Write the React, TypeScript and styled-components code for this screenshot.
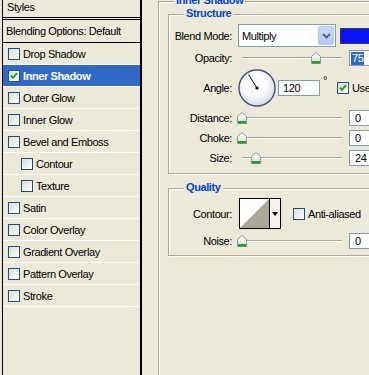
import React from "react";
import styled, { createGlobalStyle } from "styled-components";

const GlobalStyle = createGlobalStyle`
  html, body {
    margin: 0;
    padding: 0;
    background: #ece9d8;
  }
  body {
    font-family: Tahoma, "Liberation Sans", Arial, sans-serif;
    font-size: 11px;
    letter-spacing: -0.4px;
    color: #000;
  }
`;

const Window = styled.div`
  display: flex;
  width: 369px;
  height: 375px;
  overflow: hidden;
  background: #ece9d8;
`;

/* ---------- left: styles list ---------- */

const StylesPanel = styled.div`
  flex: none;
  width: 137px;
  margin-left: 2px;
  border-left: 1px solid #000;
  border-right: 2px solid #000;
  display: flex;
  flex-direction: column;
`;

const PanelHeader = styled.div`
  height: 17px;
  line-height: 14px;
  padding-left: 4px;
  border-bottom: 3px double #000;
`;

const BlendingRow = styled.div`
  height: 22px;
  line-height: 22px;
  padding-left: 3px;
  border-bottom: 1px solid #000;
`;

const EffectRow = styled.div<{ $indent?: boolean; $selected?: boolean }>`
  display: flex;
  align-items: center;
  height: 21px;
  padding-left: ${(p) => (p.$indent ? 18 : 5)}px;
  border-bottom: 1px solid #fff;
  background: ${(p) => (p.$selected ? "#316ac5" : "transparent")};
  color: ${(p) => (p.$selected ? "#fff" : "#000")};
  font-weight: ${(p) => (p.$selected ? "bold" : "normal")};
`;

const Box = styled.span`
  flex: none;
  position: relative;
  width: 10px;
  height: 10px;
  border: 1px solid #1c5180;
  background: linear-gradient(135deg, #dcdcd7 0%, #f4f4f0 70%, #fff 100%);
  margin-right: 3px;

  svg {
    position: absolute;
    left: 0;
    top: 0;
  }
`;

const Checkbox = ({ checked }: { checked?: boolean }) => (
  <Box>
    {checked && (
      <svg width="10" height="10" viewBox="0 0 10 10">
        <path d="M2 4.5 L4 6.8 L8 2.2" fill="none" stroke="#21a121" strokeWidth="2" />
      </svg>
    )}
  </Box>
);

/* ---------- right: options ---------- */

const OptionsArea = styled.div`
  flex: none;
  width: 260px;
  margin-left: 16px;
  padding-top: 1px;
`;

const OuterGroup = styled.div`
  position: relative;
  height: 420px;
  border-top: 1px solid #aca899;
  border-left: 1px solid #aca899;
  box-shadow: inset 1px 1px 0 #fff;
  padding: 12px 0 0 9px;
`;

const GroupBox = styled.div<{ $gap?: number; $padTop: number; $padBottom: number }>`
  position: relative;
  width: 250px;
  margin-top: ${(p) => p.$gap ?? 0}px;
  border: 1px solid #aca899;
  box-shadow: inset 1px 1px 0 #fff, 1px 1px 0 #fff;
  padding: ${(p) => p.$padTop}px 0 ${(p) => p.$padBottom}px 0;
`;

const Legend = styled.span`
  position: absolute;
  top: -8px;
  left: 15px;
  padding: 0 2px;
  line-height: 13px;
  background: #ece9d8;
  color: #0046d5;
  font-weight: bold;
  white-space: nowrap;
`;

const FieldRow = styled.div<{ $top?: number; $height?: number }>`
  display: flex;
  align-items: center;
  height: ${(p) => p.$height ?? 16}px;
  margin-top: ${(p) => p.$top ?? 0}px;
`;

const FieldLabel = styled.span`
  flex: none;
  width: 63px;
  margin-right: 6px;
  text-align: right;
  white-space: nowrap;
`;

const Select = styled.div`
  flex: none;
  display: flex;
  align-items: center;
  box-sizing: border-box;
  width: 98px;
  height: 23px;
  border: 1px solid #7f9db9;
  background: #fff;
`;

const SelectText = styled.span`
  flex: 1;
  padding-left: 3px;
`;

const DropButton = styled.span`
  flex: none;
  display: flex;
  align-items: center;
  justify-content: center;
  box-sizing: border-box;
  width: 16px;
  height: 19px;
  margin-right: 1px;
  border: 1px solid #b1c5f2;
  border-radius: 2px;
  background: linear-gradient(#cbdaf9, #b4c8f5);
`;

const ColorSwatch = styled.span`
  flex: none;
  width: 40px;
  height: 14px;
  margin-left: 4px;
  border: 1px solid #3a3a3a;
  background: #0a14f7;
`;

const Track = styled.div`
  flex: none;
  position: relative;
  width: 100px;
  height: 16px;
  margin-left: 4px;

  &::before {
    content: "";
    position: absolute;
    left: 0;
    right: 0;
    top: 7px;
    height: 1px;
    background: #aca899;
    border-bottom: 1px solid #fff;
  }
`;

const Thumb = styled.svg`
  position: absolute;
  top: 2px;
  margin-left: -5px;
`;

const ValueBox = styled.span<{ $width?: number; $pad?: number }>`
  flex: none;
  box-sizing: border-box;
  width: ${(p) => p.$width ?? 30}px;
  height: 16px;
  margin-left: 7px;
  padding-left: ${(p) => p.$pad ?? 5}px;
  line-height: 14px;
  border: 1px solid #7f9db9;
  background: #fff;
`;

const Highlight = styled.span`
  display: inline-block;
  padding: 0 1px;
  line-height: 13px;
  margin-top: 1px;
  background: #316ac5;
  color: #fff;
`;

const Degree = styled.span`
  flex: none;
  margin-left: 3px;
  align-self: flex-start;
  margin-top: 6px;
  line-height: 11px;
`;

const CheckLabel = styled.label<{ $gap: number }>`
  flex: none;
  display: flex;
  align-items: center;
  margin-left: ${(p) => p.$gap}px;
  white-space: nowrap;
`;

const ContourPicker = styled.div`
  flex: none;
  display: flex;
  width: 40px;
  height: 29px;
  margin-left: 1px;
  border: 1px solid #000;
  background: #fff;
`;

const ContourArrow = styled.span`
  flex: none;
  display: flex;
  align-items: center;
  justify-content: center;
  width: 10px;
  border-left: 1px solid #000;
  background: #f4f3ee;
`;

const Slider = ({ at }: { at: number }) => (
  <Track>
    <Thumb width="10" height="12" viewBox="0 0 10 12" style={{ left: at }}>
      <defs>
        <linearGradient id="th" x1="0" y1="0" x2="0" y2="1">
          <stop offset="0" stopColor="#ffffff" />
          <stop offset="1" stopColor="#dcdcd4" />
        </linearGradient>
      </defs>
      <path d="M0.5 4.5 L5 0.5 L9.5 4.5 V11.5 H0.5 Z" fill="url(#th)" stroke="#8a9aa6" />
      <rect x="1" y="9" width="8" height="2.5" fill="#21a121" />
    </Thumb>
  </Track>
);

const Dial = () => (
  <svg width="38" height="38" viewBox="0 0 38 38" style={{ flex: "none" }}>
    <defs>
      <radialGradient id="dial" cx="0.45" cy="0.4" r="0.6">
        <stop offset="0.55" stopColor="#fbfbfd" />
        <stop offset="1" stopColor="#d7d9e2" />
      </radialGradient>
    </defs>
    <circle cx="19" cy="19" r="18" fill="url(#dial)" stroke="#3e5579" strokeWidth="1.4" />
    <line x1="19" y1="19" x2="10.5" y2="5.5" stroke="#000" strokeWidth="1" />
    <circle cx="19" cy="19" r="1.6" fill="#000" />
  </svg>
);

const effects: { name: string; checked?: boolean; selected?: boolean; indent?: boolean }[] = [
  { name: "Drop Shadow" },
  { name: "Inner Shadow", checked: true, selected: true },
  { name: "Outer Glow" },
  { name: "Inner Glow" },
  { name: "Bevel and Emboss" },
  { name: "Contour", indent: true },
  { name: "Texture", indent: true },
  { name: "Satin" },
  { name: "Color Overlay" },
  { name: "Gradient Overlay" },
  { name: "Pattern Overlay" },
  { name: "Stroke" },
];

const App: React.FC = () => {
  return (
    <Window>
      <GlobalStyle />
      <StylesPanel>
        <PanelHeader>Styles</PanelHeader>
        <BlendingRow>Blending Options: Default</BlendingRow>
        {effects.map((e) => (
          <EffectRow key={e.name} $indent={e.indent} $selected={e.selected}>
            <Checkbox checked={e.checked} />
            {e.name}
          </EffectRow>
        ))}
      </StylesPanel>

      <OptionsArea>
        <OuterGroup>
          <Legend>Inner Shadow</Legend>

          <GroupBox $padTop={9} $padBottom={7}>
            <Legend>Structure</Legend>
            <FieldRow $height={23}>
              <FieldLabel>Blend Mode:</FieldLabel>
              <Select>
                <SelectText>Multiply</SelectText>
                <DropButton>
                  <svg width="9" height="6" viewBox="0 0 9 6">
                    <path d="M1 1 L4.5 4.5 L8 1" fill="none" stroke="#4d6185" strokeWidth="1.8" />
                  </svg>
                </DropButton>
              </Select>
              <ColorSwatch />
            </FieldRow>
            <FieldRow $top={3}>
              <FieldLabel>Opacity:</FieldLabel>
              <Slider at={74} />
              <ValueBox $pad={1}>
                <Highlight>75</Highlight>
              </ValueBox>
            </FieldRow>
            <FieldRow $top={3} $height={38}>
              <FieldLabel>Angle:</FieldLabel>
              <Dial />
              <ValueBox $width={42} $pad={4} style={{ marginLeft: 2 }}>
                120
              </ValueBox>
              <Degree>°</Degree>
              <CheckLabel $gap={10}>
                <Checkbox checked />
                Use
              </CheckLabel>
            </FieldRow>
            <FieldRow $top={3}>
              <FieldLabel>Distance:</FieldLabel>
              <Slider at={0} />
              <ValueBox>0</ValueBox>
            </FieldRow>
            <FieldRow $top={4}>
              <FieldLabel>Choke:</FieldLabel>
              <Slider at={0} />
              <ValueBox>0</ValueBox>
            </FieldRow>
            <FieldRow $top={4}>
              <FieldLabel>Size:</FieldLabel>
              <Slider at={14} />
              <ValueBox>24</ValueBox>
            </FieldRow>
          </GroupBox>

          <GroupBox $gap={14} $padTop={9} $padBottom={6}>
            <Legend>Quality</Legend>
            <FieldRow $height={31}>
              <FieldLabel>Contour:</FieldLabel>
              <ContourPicker>
                <svg width="29" height="29" viewBox="0 0 29 29" style={{ flex: "none" }}>
                  <path d="M0 29 L29 0 V29 Z" fill="#aaa799" />
                </svg>
                <ContourArrow>
                  <svg width="6" height="4" viewBox="0 0 6 4">
                    <path d="M0 0 H6 L3 4 Z" fill="#000" />
                  </svg>
                </ContourArrow>
              </ContourPicker>
              <CheckLabel $gap={12}>
                <Checkbox />
                Anti-aliased
              </CheckLabel>
            </FieldRow>
            <FieldRow $top={4}>
              <FieldLabel>Noise:</FieldLabel>
              <Slider at={0} />
              <ValueBox>0</ValueBox>
            </FieldRow>
          </GroupBox>
        </OuterGroup>
      </OptionsArea>
    </Window>
  );
};

export default App;
